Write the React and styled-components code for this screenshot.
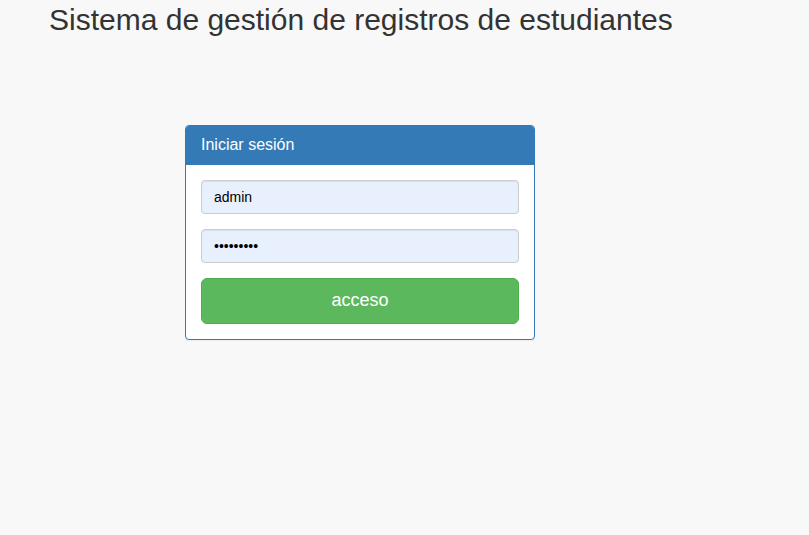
import React from 'react';
import styled, {createGlobalStyle} from 'styled-components';

const GlobalStyle = createGlobalStyle`
  html, body {
    margin: 0;
    padding: 0;
    background: #f8f8f8;
  }
  body {
    font-family: "Liberation Sans", Arial, sans-serif;
    font-size: 14px;
    line-height: 1.42857;
    color: #333;
  }
  * {
    box-sizing: border-box;
  }
`;

const Page = styled.div`
  min-height: 535px;
  padding: 3px 0 0 49px;
`;

const Title = styled.h2`
  margin: 0;
  font-size: 30px;
  font-weight: 500;
  line-height: 1.1;
  color: #333;
`;

const Panel = styled.div`
  width: 350px;
  margin: 89px 0 0 136px;
  background: #fff;
  border: 1px solid #337ab7;
  border-radius: 4px;
  box-shadow: 0 1px 1px rgba(0, 0, 0, 0.05);
`;

const PanelHeading = styled.div`
  padding: 10px 15px;
  background: #337ab7;
  color: #fff;
  border-bottom: 1px solid #337ab7;
  border-radius: 3px 3px 0 0;
`;

const PanelTitle = styled.h3`
  margin: 0;
  font-size: 16px;
  font-weight: 400;
  line-height: 1.1;
`;

const PanelBody = styled.form`
  padding: 15px;
`;

const FormGroup = styled.div`
  margin-bottom: 15px;
`;

const Input = styled.input`
  display: block;
  width: 100%;
  height: 34px;
  padding: 6px 12px;
  font-family: "Liberation Sans", Arial, sans-serif;
  font-size: 14px;
  color: #000;
  background: #e8f0fe;
  border: 1px solid #ccc;
  border-radius: 4px;
  box-shadow: inset 0 1px 1px rgba(0, 0, 0, 0.075);
  outline: none;
`;

const Button = styled.button`
  display: block;
  width: 100%;
  height: 46px;
  padding: 10px 16px;
  font-family: "Liberation Sans", Arial, sans-serif;
  font-size: 18px;
  line-height: 1.3333;
  color: #fff;
  background: #5cb85c;
  border: 1px solid #4cae4c;
  border-radius: 6px;
  cursor: pointer;
`;

export default function App() {
  return (
    <Page>
      <GlobalStyle/>
      <Title>Sistema de gestión de registros de estudiantes</Title>
      <Panel>
        <PanelHeading>
          <PanelTitle>Iniciar sesión</PanelTitle>
        </PanelHeading>
        <PanelBody onSubmit={e => e.preventDefault()}>
          <FormGroup>
            <Input type='text' defaultValue='admin'/>
          </FormGroup>
          <FormGroup>
            <Input type='password' defaultValue='123456789'/>
          </FormGroup>
          <Button type='submit'>acceso</Button>
        </PanelBody>
      </Panel>
    </Page>
  );
}
